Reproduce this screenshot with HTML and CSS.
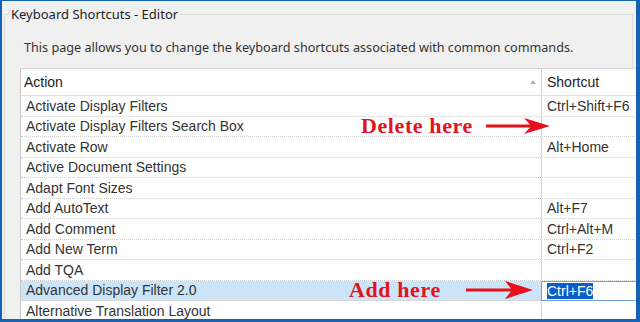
FILE: index.html
```html
<!DOCTYPE html>
<html lang="en">
<head>
    <meta charset="UTF-8">
    <title>Keyboard Shortcuts - Editor</title>
    <link rel="stylesheet" href="styles.css">
</head>
<body>
    <div class="window">
        <fieldset class="group">
            <legend>Keyboard Shortcuts - Editor</legend>
            <p class="intro">This page allows you to change the keyboard shortcuts associated with common commands.</p>

            <div class="grid">
                <div class="row head">
                    <div class="cell action">Action<span class="sort"></span></div>
                    <div class="cell key">Shortcut</div>
                </div>
                <div class="row"><div class="cell action">Activate Display Filters</div><div class="cell key">Ctrl+Shift+F6</div></div>
                <div class="row"><div class="cell action">Activate Display Filters Search Box</div><div class="cell key"></div></div>
                <div class="row"><div class="cell action">Activate Row</div><div class="cell key">Alt+Home</div></div>
                <div class="row"><div class="cell action">Active Document Settings</div><div class="cell key"></div></div>
                <div class="row"><div class="cell action">Adapt Font Sizes</div><div class="cell key"></div></div>
                <div class="row"><div class="cell action">Add AutoText</div><div class="cell key">Alt+F7</div></div>
                <div class="row"><div class="cell action">Add Comment</div><div class="cell key">Ctrl+Alt+M</div></div>
                <div class="row"><div class="cell action">Add New Term</div><div class="cell key">Ctrl+F2</div></div>
                <div class="row"><div class="cell action">Add TQA</div><div class="cell key"></div></div>
                <div class="row selected">
                    <div class="cell action">Advanced Display Filter 2.0</div>
                    <div class="cell key editing"><span class="picked">Ctrl+F6</span></div>
                </div>
                <div class="row"><div class="cell action">Alternative Translation Layout</div><div class="cell key"></div></div>
            </div>
        </fieldset>

        <!-- annotations drawn over the grid -->
        <div class="note note-delete">
            <span>Delete here</span>
            <svg width="64" height="16" viewBox="0 0 64 16"><path d="M0 6.5H44L38 0L64 8L38 16L44 9.5H0Z" fill="#e8101a"/></svg>
        </div>
        <div class="note note-add">
            <span>Add here</span>
            <svg width="67" height="18" viewBox="0 0 67 18"><path d="M0 7.5H45L39 0L67 9L39 18L45 10.5H0Z" fill="#e8101a"/></svg>
        </div>
    </div>
</body>
</html>
```

FILE: styles.css
```css
body {
    margin: 0;
    padding: 0;
    width: 640px;
    height: 322px;
    overflow: hidden;
    font-family: 'Noto Sans', 'Open Sans', sans-serif;
}
.window {
    position: relative;
    box-sizing: border-box;
    width: 640px;
    height: 322px;
    overflow: hidden;
    background-color: #f0f0f0;
    border-style: solid;
    border-color: #1462b4;
    border-width: 1px 4px 3px 2px;
}
.group {
    margin: 5px 3px 0 2px;
    padding: 0;
    height: 330px;
    border: 1px solid #dcdcdc;
    min-width: 0;
}
.group legend {
    margin-left: 4px;
    padding: 0 2px;
    font-size: 13px;
    line-height: 17px;
    color: #222;
}
.intro {
    margin: 16px 0 0 19px;
    font-size: 12.65px;
    line-height: 17px;
    color: #333;
}
.grid {
    margin: 12px 0 0 15px;
    width: 620px;
    background-color: white;
    border-top: 1px solid #d5d5d5;
    border-left: 1px solid #c8c8c8;
    font-family: 'Liberation Sans', Arial, sans-serif;
    font-size: 14px;
    color: #333;
}
.row {
    display: grid;
    grid-template-columns: 520px 1fr;
    box-sizing: border-box;
    height: 20.5px;
    border-bottom: 1px dotted #cfcfcf;
}
.row.head {
    height: 27px;
    border-bottom: 1px solid #dedede;
    color: #222;
}
.cell {
    display: flex;
    align-items: center;
    padding-left: 5px;
    white-space: nowrap;
}
.key {
    border-left: 1px solid #c9d1dc;
}
.head .action {
    position: relative;
    padding-left: 3px;
}
.sort {
    position: absolute;
    right: 5px;
    top: 11px;
    width: 0;
    height: 0;
    border-left: 3px solid transparent;
    border-right: 3px solid transparent;
    border-bottom: 4px solid #b4b4b4;
}
.selected {
    background-color: #cce4f7;
}
.key.editing {
    background-color: white;
    border: 1px solid #6f9fd8;
    margin-bottom: -1px;
    padding-left: 5px;
}
.picked {
    background-color: #0a5ec8;
    color: white;
    line-height: 16px;
}
.note {
    position: absolute;
    display: flex;
    align-items: center;
    gap: 13px;
    font-family: 'Liberation Serif', 'Times New Roman', serif;
    font-weight: bold;
    font-size: 22px;
    letter-spacing: 0.6px;
    color: #e0141e;
}
.note-delete {
    left: 359px;
    top: 112px;
}
.note-add {
    left: 347px;
    top: 276px;
    gap: 25px;
}
```
